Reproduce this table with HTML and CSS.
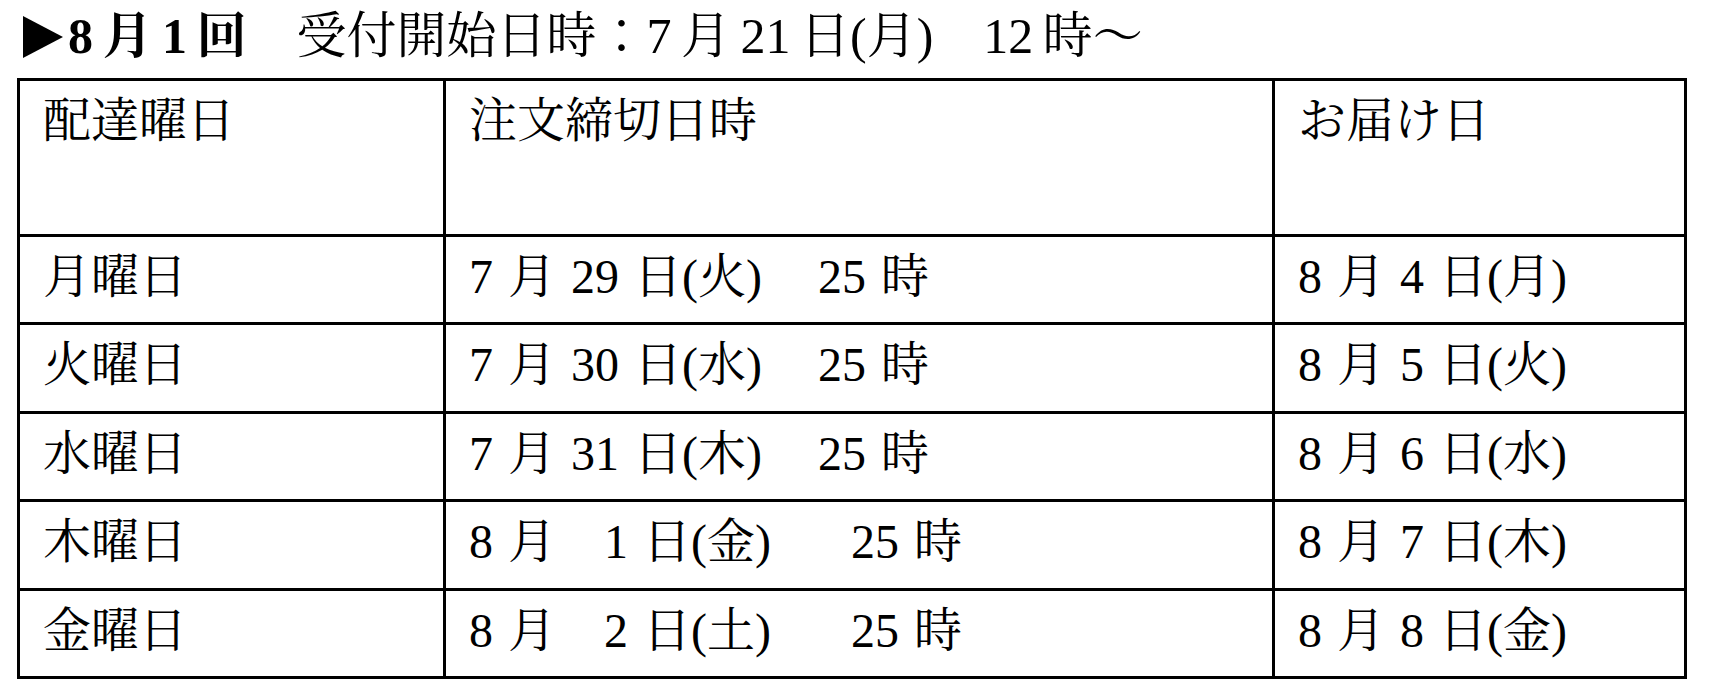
FILE: index.html
```html
<!DOCTYPE html>
<html lang="ja">
<head>
<meta charset="utf-8">
<title>8月1回 配達スケジュール</title>
<link rel="stylesheet" href="styles.css">
</head>
<body>
<div class="page">
  <div class="title"><svg class="mark" width="40" height="42" viewBox="0 0 40 42" aria-hidden="true"><polygon points="0,0 40,21 0,42" fill="#000"/></svg><span class="round">8 月 1 回</span>　受付開始日時：7 月 21 日(月)　12 時～</div>
  <table class="schedule">
    <tr class="head">
      <td class="c1">配達曜日</td>
      <td class="c2">注文締切日時</td>
      <td class="c3">お届け日</td>
    </tr>
    <tr>
      <td>月曜日</td>
      <td>7 月 29 日(火)　<span class="time">25 時</span></td>
      <td>8 月 4 日(月)</td>
    </tr>
    <tr>
      <td>火曜日</td>
      <td>7 月 30 日(水)　<span class="time">25 時</span></td>
      <td>8 月 5 日(火)</td>
    </tr>
    <tr>
      <td>水曜日</td>
      <td>7 月 31 日(木)　<span class="time">25 時</span></td>
      <td>8 月 6 日(水)</td>
    </tr>
    <tr>
      <td>木曜日</td>
      <td>8 月　1 日(金)　<span class="time late">25 時</span></td>
      <td>8 月 7 日(木)</td>
    </tr>
    <tr>
      <td>金曜日</td>
      <td>8 月　2 日(土)　<span class="time late">25 時</span></td>
      <td>8 月 8 日(金)</td>
    </tr>
  </table>
</div>
</body>
</html>
```

FILE: styles.css
```css
html, body {
  margin: 0;
  padding: 0;
  background: #fff;
}

body {
  font-family: "Liberation Serif", "Noto Serif CJK JP", "IPAexMincho", "IPAMincho", "Noto Sans CJK JP", serif;
  color: #000;
}

.page {
  padding-left: 17px;
}

.title {
  box-sizing: border-box;
  height: 78px;
  padding-top: 11px;
  padding-left: 6px;
  font-size: 50px;
  line-height: 50px;
  white-space: nowrap;
  word-spacing: -3px;
}

.mark {
  vertical-align: -5px;
  margin-right: 5px;
}

.round {
  font-weight: bold;
}

.schedule {
  box-sizing: border-box;
  width: 1670px;
  table-layout: fixed;
  border-collapse: separate;
  border-spacing: 0;
  border-top: 3px solid #000;
  border-left: 3px solid #000;
  font-size: 48px;
  line-height: 48px;
}

.schedule td {
  box-sizing: border-box;
  height: 88.4px;
  padding: 16px 0 0 23px;
  vertical-align: top;
  white-space: pre;
  word-spacing: 3px;
  border-right: 3px solid #000;
  border-bottom: 3px solid #000;
}

.schedule .head td {
  height: 156px;
}

.schedule .c1 { width: 426px; }
.schedule .c2 { width: 829px; }
.schedule .c3 { width: 412px; }

.time {
  margin-left: 8px;
}

.time.late {
  margin-left: 32px;
}
```
